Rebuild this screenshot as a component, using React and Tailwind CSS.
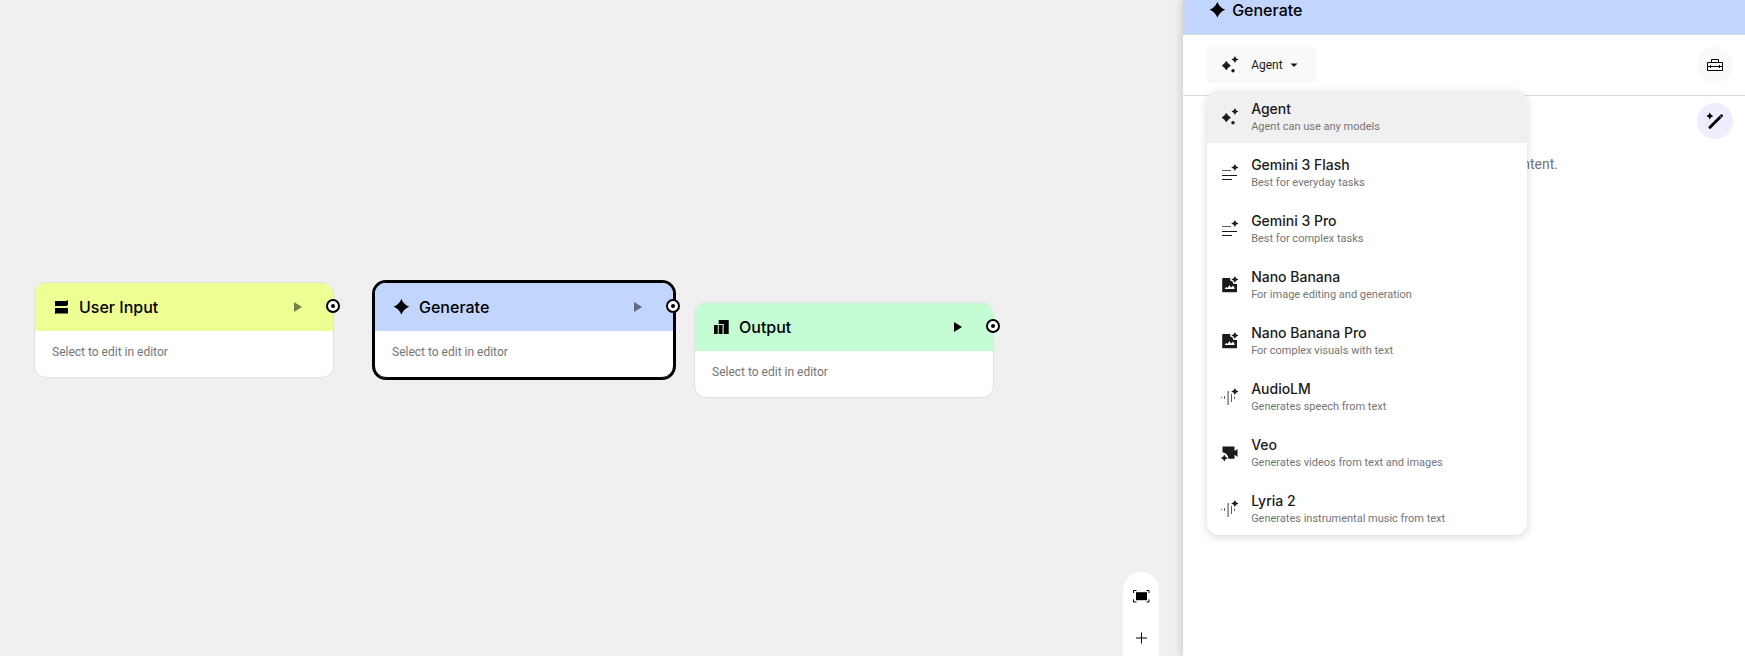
import clsx from "clsx";

/* ---------- icons ---------- */

function Icon({ className, children }) {
  return (
    <svg viewBox="0 0 20 20" fill="currentColor" aria-hidden="true" className={clsx("h-5 w-5 shrink-0", className)}>
      {children}
    </svg>
  );
}

function InputIcon() {
  return (
    <Icon>
      <path d="M3 4h11.200L16 3v5l-1.500 1H3zM3 11h13v5.500H4.500L3 17z" />
    </Icon>
  );
}

function SparkIcon() {
  return (
    <Icon>
      <path d="M9.400 2Q11.700 7.500 17.200 9.800 11.700 12.100 9.400 17.600 7.100 12.100 1.600 9.800 7.100 7.500 9.400 2z" />
    </Icon>
  );
}

function OutputIcon() {
  return (
    <Icon>
      <path d="M2 8h3.700v9H2zM6.700 8h3.800v9H6.700zM6.700 3h10v14h-5V7h-5z" />
    </Icon>
  );
}

function PlayIcon() {
  return (
    <Icon>
      <path d="M6 5l8 5-8 5z" />
    </Icon>
  );
}

function AgentIcon() {
  return (
    <Icon>
      <path d="M6.300 6.300L8.200 8.800 10.600 10.600 8.200 12.400 6.300 14.900 4.400 12.400 2 10.600 4.400 8.800z" stroke="currentColor" strokeWidth="0.500" strokeLinejoin="round" />
      <path d="M14.900 1L16.100 3.300 18.400 4.500 16.100 5.700 14.900 8 13.700 5.700 11.400 4.500 13.700 3.300z" />
      <circle cx="13" cy="15.700" r="1.700" />
    </Icon>
  );
}

const SMALL_SPARK = "M14.900 1L16.100 3.300 18.600 4.500 16.100 5.700 14.900 8 13.700 5.700 11.200 4.500 13.700 3.300z";

function TextIcon() {
  return (
    <Icon>
      <path d={SMALL_SPARK} />
      <path d="M2 7h9v1H2z" opacity="0.700" />
      <path d="M2 12h15v1H2zM2 16h10v1H2z" />
    </Icon>
  );
}

function ImageIcon() {
  return (
    <Icon>
      <path d={SMALL_SPARK} />
      <path
        fillRule="evenodd"
        d="M3 3h7.200v2.400l2.300 1 1 2.600H17v7.500q0 .8-.8.8H3q-.8 0-.8-.8V3.800Q2.200 3 3 3zM5 14h9.500v-1.500l-1.700-1.700-1.700 1.700-1.700-2.300-2 2.700-1-1L5 13z"
      />
    </Icon>
  );
}

function AudioIcon() {
  return (
    <Icon>
      <path d={SMALL_SPARK} />
      <path d="M1 10h1v1H1zM4 9h1v3H4zM7.500 4h1.200v14H7.500zM11 7h1v8h-1zM14 9.500h1v2.500h-1z" opacity="0.700" />
    </Icon>
  );
}

function VideoIcon() {
  return (
    <Icon>
      <path d="M2.500 3.500h12v4.500L17.500 6v8l-3-2.200v4H8.500Q8 10.500 2.500 9.300z" />
      <path d="M4.300 11.400L5.500 13.800 7.900 15 5.500 16.200 4.300 18.600 3.100 16.200.7 15 3.100 13.800z" />
    </Icon>
  );
}

function ToolboxIcon() {
  return (
    <Icon>
      <path
        fill="none"
        stroke="currentColor"
        d="M2.500 7.500h15v8h-15zM6.500 7V4.500h7V7M2.500 11.500h15M5.500 10v3M14.500 10v3"
      />
    </Icon>
  );
}

function WandIcon() {
  return (
    <Icon>
      <path d="M4.800 1.500L6 3.800 8.300 5 6 6.200 4.800 8.500 3.600 6.200 1.300 5 3.600 3.800z" />
      <path fill="none" stroke="currentColor" strokeWidth="3" strokeLinecap="round" d="M5 16.300L16.500 4.800" />
      <path fill="none" stroke="#eeecfd" strokeWidth="0.700" d="M14.300 4.500l2.200 2.200" />
    </Icon>
  );
}

function FitIcon() {
  return (
    <Icon>
      <path d="M5 6.200h11v8H5z" />
      <path fill="none" stroke="currentColor" d="M2.500 7V4.500H5.500M15.500 4.500h2.500V7M18 13.500V16h-2.500M5.500 16H2.500v-2.500" />
    </Icon>
  );
}

function PlusIcon() {
  return (
    <Icon>
      <path d="M5 9.500h5v-5h1v5h5v1h-5v5h-1v-5H5z" />
    </Icon>
  );
}

/* ---------- data ---------- */

const nodes = [
  { title: "User Input", icon: InputIcon, place: "left-[34px] top-[282px]", color: "bg-[#eeff94]", play: "text-black/50" },
  {
    title: "Generate",
    icon: SparkIcon,
    place: "left-[374px] top-[282px]",
    color: "bg-[#c2d5fd]",
    play: "text-black/50",
    selected: true,
  },
  { title: "Output", icon: OutputIcon, place: "left-[694px] top-[302px]", color: "bg-[#c4fdd4]", play: "text-black" },
];

const models = [
  { name: "Agent", info: "Agent can use any models", icon: AgentIcon },
  { name: "Gemini 3 Flash", info: "Best for everyday tasks", icon: TextIcon },
  { name: "Gemini 3 Pro", info: "Best for complex tasks", icon: TextIcon },
  { name: "Nano Banana", info: "For image editing and generation", icon: ImageIcon },
  { name: "Nano Banana Pro", info: "For complex visuals with text", icon: ImageIcon },
  { name: "AudioLM", info: "Generates speech from text", icon: AudioIcon },
  { name: "Veo", info: "Generates videos from text and images", icon: VideoIcon },
  { name: "Lyria 2", info: "Generates instrumental music from text", icon: AudioIcon },
];

/* ---------- canvas ---------- */

function Node({ title, icon: NodeIcon, place, color, play, selected }) {
  return (
    <div className={clsx("absolute w-[300px]", place)}>
      <div
        className={clsx(
          "overflow-hidden rounded-xl border bg-white",
          selected ? "border-black ring-2 ring-black" : "border-[#e0e0e0]"
        )}
      >
        <div className={clsx("flex h-12 items-center gap-[7px] px-[17px]", color)}>
          <NodeIcon />
          <h2 className="flex-1 font-['Inter',sans-serif] text-base font-medium">{title}</h2>
          <button aria-label={`Run ${title}`} className={clsx("mr-2", play)}>
            <PlayIcon />
          </button>
        </div>
        <p className="px-[17px] pt-3 pb-4 text-xs leading-[18px] text-[#757575]">Select to edit in editor</p>
      </div>

      {/* Connection port */}
      <span className="absolute top-[17px] -right-1.5 flex h-3.5 w-3.5 items-center justify-center rounded-full border-2 border-black bg-white">
        <span className="h-1 w-1 rounded-full bg-black"></span>
      </span>
    </div>
  );
}

function Canvas() {
  return (
    <main className="relative flex-1 overflow-hidden bg-[#f0f0f0]">
      {nodes.map((node) => (
        <Node key={node.title} {...node} />
      ))}

      {/* Zoom controls */}
      <div className="absolute right-6 bottom-0 flex w-9 flex-col items-center gap-[22px] rounded-t-full bg-white pt-3.5 pb-2">
        <button aria-label="Zoom to fit">
          <FitIcon />
        </button>
        <button aria-label="Zoom in">
          <PlusIcon />
        </button>
      </div>
    </main>
  );
}

/* ---------- side panel ---------- */

function ModelMenu() {
  return (
    <ul
      role="listbox"
      aria-label="Model"
      className="absolute top-11 left-0 z-10 flex w-80 flex-col gap-1 overflow-hidden rounded-xl bg-white shadow-[0_2px_8px_rgba(0,0,0,0.16)]"
    >
      {models.map(({ name, info, icon: ModelIcon }, i) => (
        <li key={name} role="option" aria-selected={i === 0}>
          <button
            className={clsx(
              "flex h-[52px] w-full items-center gap-[11px] px-[13px] text-left text-[#1b1b1b]",
              i === 0 && "bg-[#f0f0f0]"
            )}
          >
            <ModelIcon />
            <span className="flex flex-col">
              <span className="font-['Inter',sans-serif] text-sm leading-5 font-medium">{name}</span>
              <span className="text-[11px] leading-4 text-[#757575]">{info}</span>
            </span>
          </button>
        </li>
      ))}
    </ul>
  );
}

function SidePanel() {
  return (
    <aside className="relative flex w-[32.2%] flex-col bg-white shadow-[0_0_10px_rgba(0,0,0,0.2)]">
      <header className="flex items-center gap-1 border-b border-[#dadce0] bg-[#c2d5fd] px-[25px] pb-3.5">
        <SparkIcon />
        <h1 className="font-['Inter',sans-serif] text-base leading-5 font-medium">Generate</h1>
      </header>

      <div className="flex items-center justify-between border-b border-[#dadce0] py-3 pr-3 pl-6">
        <div className="relative">
          <button
            aria-haspopup="listbox"
            aria-expanded="true"
            className="flex h-9 items-center gap-[11px] rounded bg-[#f9f9f9] pr-[17px] pl-[13px] text-xs text-[#1b1b1b]"
          >
            <AgentIcon />
            <span className="flex items-center gap-1.5">
              Agent
              <svg viewBox="0 0 10 10" fill="currentColor" aria-hidden="true" className="h-2.5 w-2.5">
                <path d="M1.500 3.500h7L5 7z" />
              </svg>
            </span>
          </button>
          <ModelMenu />
        </div>
        <button aria-label="Tools" className="flex h-9 w-9 items-center justify-center rounded-full bg-[#f9f9f9]">
          <ToolboxIcon />
        </button>
      </div>

      <div className="flex items-start justify-end gap-[139px] py-[7px] pr-3">
        <p className="pt-[51px] text-sm leading-5 text-[#757575]">content.</p>
        <button aria-label="Enhance" className="flex h-9 w-9 items-center justify-center rounded-full bg-[#eeecfd]">
          <WandIcon />
        </button>
      </div>
    </aside>
  );
}

export default function App() {
  return (
    <div className="flex h-screen overflow-hidden font-['Roboto',sans-serif] text-black">
      <Canvas />
      <SidePanel />
    </div>
  );
}
